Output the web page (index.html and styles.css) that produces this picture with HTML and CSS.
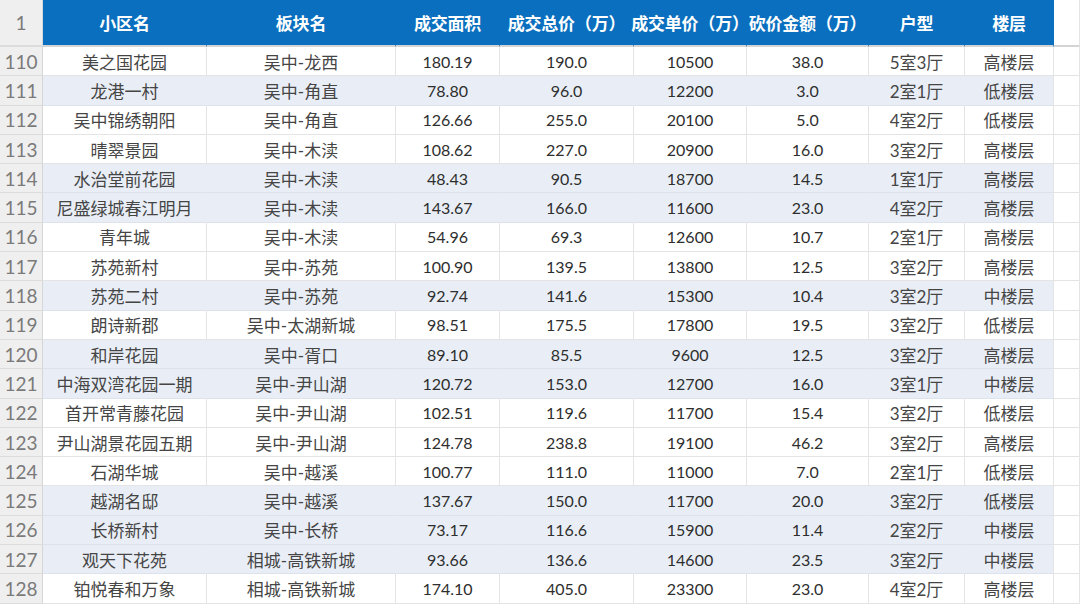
FILE: index.html
```html
<!DOCTYPE html>
<html lang="zh">
<head>
<meta charset="utf-8">
<title>成交数据</title>
<link rel="stylesheet" href="styles.css">
</head>
<body>
<div class="sheet">
  <div class="row head">
    <div class="rn">1</div>
    <div class="c">小区名</div>
    <div class="c">板块名</div>
    <div class="c">成交面积</div>
    <div class="c">成交总价（万）</div>
    <div class="c">成交单价（万）</div>
    <div class="c">砍价金额（万）</div>
    <div class="c">户型</div>
    <div class="c">楼层</div>
    <div class="x"></div>
  </div>
  <div class="row"><div class="rn">110</div><div class="c">美之国花园</div><div class="c">吴中-龙西</div><div class="c n">180.19</div><div class="c n">190.0</div><div class="c n">10500</div><div class="c n">38.0</div><div class="c">5室3厅</div><div class="c">高楼层</div><div class="x"></div></div>
  <div class="row alt"><div class="rn">111</div><div class="c">龙港一村</div><div class="c">吴中-角直</div><div class="c n">78.80</div><div class="c n">96.0</div><div class="c n">12200</div><div class="c n">3.0</div><div class="c">2室1厅</div><div class="c">低楼层</div><div class="x"></div></div>
  <div class="row"><div class="rn">112</div><div class="c">吴中锦绣朝阳</div><div class="c">吴中-角直</div><div class="c n">126.66</div><div class="c n">255.0</div><div class="c n">20100</div><div class="c n">5.0</div><div class="c">4室2厅</div><div class="c">低楼层</div><div class="x"></div></div>
  <div class="row"><div class="rn">113</div><div class="c">晴翠景园</div><div class="c">吴中-木渎</div><div class="c n">108.62</div><div class="c n">227.0</div><div class="c n">20900</div><div class="c n">16.0</div><div class="c">3室2厅</div><div class="c">高楼层</div><div class="x"></div></div>
  <div class="row alt"><div class="rn">114</div><div class="c">水治堂前花园</div><div class="c">吴中-木渎</div><div class="c n">48.43</div><div class="c n">90.5</div><div class="c n">18700</div><div class="c n">14.5</div><div class="c">1室1厅</div><div class="c">高楼层</div><div class="x"></div></div>
  <div class="row alt"><div class="rn">115</div><div class="c">尼盛绿城春江明月</div><div class="c">吴中-木渎</div><div class="c n">143.67</div><div class="c n">166.0</div><div class="c n">11600</div><div class="c n">23.0</div><div class="c">4室2厅</div><div class="c">高楼层</div><div class="x"></div></div>
  <div class="row"><div class="rn">116</div><div class="c">青年城</div><div class="c">吴中-木渎</div><div class="c n">54.96</div><div class="c n">69.3</div><div class="c n">12600</div><div class="c n">10.7</div><div class="c">2室1厅</div><div class="c">高楼层</div><div class="x"></div></div>
  <div class="row"><div class="rn">117</div><div class="c">苏苑新村</div><div class="c">吴中-苏苑</div><div class="c n">100.90</div><div class="c n">139.5</div><div class="c n">13800</div><div class="c n">12.5</div><div class="c">3室2厅</div><div class="c">高楼层</div><div class="x"></div></div>
  <div class="row alt"><div class="rn">118</div><div class="c">苏苑二村</div><div class="c">吴中-苏苑</div><div class="c n">92.74</div><div class="c n">141.6</div><div class="c n">15300</div><div class="c n">10.4</div><div class="c">3室2厅</div><div class="c">中楼层</div><div class="x"></div></div>
  <div class="row"><div class="rn">119</div><div class="c">朗诗新郡</div><div class="c">吴中-太湖新城</div><div class="c n">98.51</div><div class="c n">175.5</div><div class="c n">17800</div><div class="c n">19.5</div><div class="c">3室2厅</div><div class="c">低楼层</div><div class="x"></div></div>
  <div class="row alt"><div class="rn">120</div><div class="c">和岸花园</div><div class="c">吴中-胥口</div><div class="c n">89.10</div><div class="c n">85.5</div><div class="c n">9600</div><div class="c n">12.5</div><div class="c">3室2厅</div><div class="c">高楼层</div><div class="x"></div></div>
  <div class="row alt"><div class="rn">121</div><div class="c">中海双湾花园一期</div><div class="c">吴中-尹山湖</div><div class="c n">120.72</div><div class="c n">153.0</div><div class="c n">12700</div><div class="c n">16.0</div><div class="c">3室1厅</div><div class="c">中楼层</div><div class="x"></div></div>
  <div class="row"><div class="rn">122</div><div class="c">首开常青藤花园</div><div class="c">吴中-尹山湖</div><div class="c n">102.51</div><div class="c n">119.6</div><div class="c n">11700</div><div class="c n">15.4</div><div class="c">3室2厅</div><div class="c">低楼层</div><div class="x"></div></div>
  <div class="row"><div class="rn">123</div><div class="c">尹山湖景花园五期</div><div class="c">吴中-尹山湖</div><div class="c n">124.78</div><div class="c n">238.8</div><div class="c n">19100</div><div class="c n">46.2</div><div class="c">3室2厅</div><div class="c">高楼层</div><div class="x"></div></div>
  <div class="row"><div class="rn">124</div><div class="c">石湖华城</div><div class="c">吴中-越溪</div><div class="c n">100.77</div><div class="c n">111.0</div><div class="c n">11000</div><div class="c n">7.0</div><div class="c">2室1厅</div><div class="c">低楼层</div><div class="x"></div></div>
  <div class="row alt"><div class="rn">125</div><div class="c">越湖名邸</div><div class="c">吴中-越溪</div><div class="c n">137.67</div><div class="c n">150.0</div><div class="c n">11700</div><div class="c n">20.0</div><div class="c">3室2厅</div><div class="c">低楼层</div><div class="x"></div></div>
  <div class="row alt"><div class="rn">126</div><div class="c">长桥新村</div><div class="c">吴中-长桥</div><div class="c n">73.17</div><div class="c n">116.6</div><div class="c n">15900</div><div class="c n">11.4</div><div class="c">2室2厅</div><div class="c">中楼层</div><div class="x"></div></div>
  <div class="row alt"><div class="rn">127</div><div class="c">观天下花苑</div><div class="c">相城-高铁新城</div><div class="c n">93.66</div><div class="c n">136.6</div><div class="c n">14600</div><div class="c n">23.5</div><div class="c">3室2厅</div><div class="c">中楼层</div><div class="x"></div></div>
  <div class="row"><div class="rn">128</div><div class="c">铂悦春和万象</div><div class="c">相城-高铁新城</div><div class="c n">174.10</div><div class="c n">405.0</div><div class="c n">23300</div><div class="c n">23.0</div><div class="c">4室2厅</div><div class="c">高楼层</div><div class="x"></div></div>
</div>
</body>
</html>
```

FILE: styles.css
```css
html, body {
  margin: 0;
  padding: 0;
  background: #ffffff;
  overflow: hidden;
}

.sheet {
  width: 1080px;
  font-family: Lato, "Noto Sans CJK SC", sans-serif;
}

.row {
  display: grid;
  grid-template-columns: 43px 164px 189px 104px 134px 113px 122px 96px 89px 1fr;
  height: 29.3px;
}

.row > div {
  box-sizing: border-box;
  display: flex;
  align-items: center;
  justify-content: center;
  white-space: nowrap;
  border-right: 1px solid #e4e4e4;
  border-bottom: 1px solid #e4e4e4;
  overflow: visible;
}

.rn {
  background: #efefef;
  color: #7a7a7a;
  font-size: 19px;
  border-right-color: #d6d6d6 !important;
  border-bottom-color: #dcdcdc !important;
}

.c {
  color: #454545;
  font-size: 17px;
}

.c.n {
  color: #2e2e2e;
  font-size: 16px;
}

.x {
  background: #ffffff;
}

.row.alt .c {
  background: #e9eef6;
  border-right-color: #e9eef6;
  border-bottom-color: #dde3ec;
}

.row.alt .c:nth-child(9) {
  border-right-color: #e4e4e4;
}

.head {
  height: 47px;
}

.head > div {
  border-bottom: 2px solid #d4d4d4;
}

.head .c {
  background: #0a6fbe;
  color: #ffffff;
  font-weight: bold;
  font-size: 17px;
  border-right-color: #0a6fbe;
  letter-spacing: -0.2px;
}

.head .rn {
  font-size: 19px;
}
```
